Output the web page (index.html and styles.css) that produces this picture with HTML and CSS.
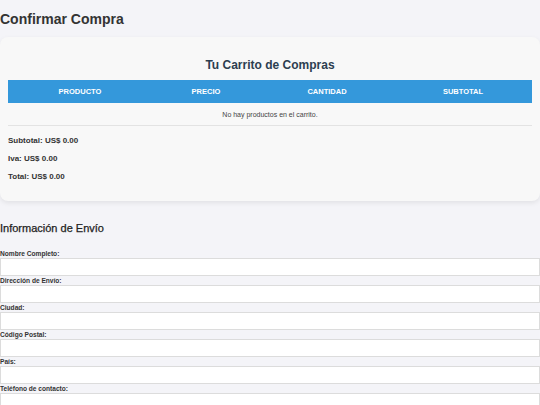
FILE: index.html
```html
<!DOCTYPE html>
<html lang="es">
<head>
<meta charset="utf-8">
<title>Confirmar Compra</title>
<link rel="stylesheet" href="styles.css">
</head>
<body>
<main class="page">
  <h1 class="page-title">Confirmar Compra</h1>

  <section class="cart-card">
    <h2 class="cart-title">Tu Carrito de Compras</h2>
    <table class="cart-table">
      <colgroup>
        <col class="col-product">
        <col class="col-price">
        <col class="col-qty">
        <col class="col-sub">
      </colgroup>
      <thead>
        <tr>
          <th>Producto</th>
          <th>Precio</th>
          <th>Cantidad</th>
          <th>Subtotal</th>
        </tr>
      </thead>
      <tbody>
        <tr>
          <td colspan="4" class="empty">No hay productos en el carrito.</td>
        </tr>
      </tbody>
    </table>
    <div class="totals">
      <p>Subtotal: US$ 0.00</p>
      <p>Iva: US$ 0.00</p>
      <p>Total: US$ 0.00</p>
    </div>
  </section>

  <h2 class="section-title">Información de Envío</h2>
  <form class="ship-form">
    <label for="nombre">Nombre Completo:</label>
    <input id="nombre" type="text">
    <label for="direccion">Dirección de Envío:</label>
    <input id="direccion" type="text">
    <label for="ciudad">Ciudad:</label>
    <input id="ciudad" type="text">
    <label for="cp">Código Postal:</label>
    <input id="cp" type="text">
    <label for="pais">País:</label>
    <input id="pais" type="text">
    <label for="tel">Teléfono de contacto:</label>
    <input id="tel" type="text">
  </form>
</main>
</body>
</html>
```

FILE: styles.css
```css
html, body {
  margin: 0;
  padding: 0;
  background: #f4f4f8;
}

body {
  font-family: "Liberation Sans", Arial, Helvetica, sans-serif;
  color: #333;
}

.page {
  display: flex;
  flex-direction: column;
}

.page-title {
  margin: 11px 0 10px;
  font-size: 14px;
  line-height: 16px;
  font-weight: bold;
  color: #333;
}

.cart-card {
  background: #f8f8f8;
  border-radius: 8px;
  padding: 8px;
  box-shadow: 0 2px 5px rgba(0, 0, 0, 0.08);
}

.cart-title {
  margin: 13px 0 8px;
  text-align: center;
  font-size: 12px;
  line-height: 14px;
  font-weight: bold;
  color: #2c3e50;
}

.cart-table {
  width: 100%;
  border-collapse: collapse;
  table-layout: fixed;
}

.col-product { width: 144px; }
.col-price { width: 108px; }
.col-qty { width: 134px; }

.cart-table th {
  height: 23px;
  padding: 0;
  background: #3498db;
  color: #fff;
  font-size: 7.5px;
  font-weight: bold;
  text-transform: uppercase;
  text-align: center;
}

.cart-table td.empty {
  height: 22px;
  padding: 0;
  text-align: center;
  font-size: 7px;
  color: #444;
  border-bottom: 1px solid #e3e3e3;
}

.totals {
  padding: 6px 0 7px;
}

.totals p {
  margin: 0;
  font-size: 8px;
  line-height: 18px;
  font-weight: bold;
  color: #333;
}

.section-title {
  margin: 21px 0 14px;
  font-size: 11px;
  line-height: 13px;
  font-weight: normal;
  color: #222;
  -webkit-text-stroke: 0.25px #222;
}

.ship-form {
  display: flex;
  flex-direction: column;
}

.ship-form label {
  display: block;
  font-size: 6.6px;
  line-height: 9px;
  font-weight: bold;
  color: #333;
}

.ship-form input {
  display: block;
  box-sizing: border-box;
  width: 100%;
  height: 18px;
  margin: 0;
  padding: 0 4px;
  border: 1px solid #dcdcdc;
  background: #fff;
}
```
